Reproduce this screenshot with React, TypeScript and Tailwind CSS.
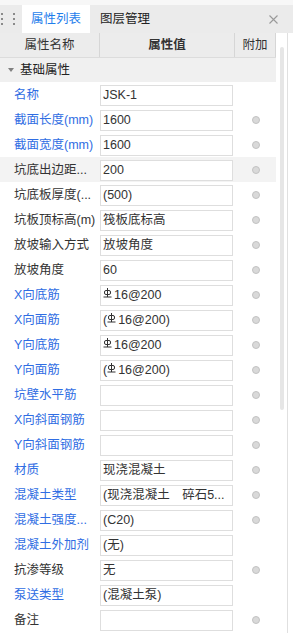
const BLUE = "text-[#2f6de3]";

type Row = { label: string; value?: string; blue?: boolean; rebar?: boolean; paren?: boolean; dot?: boolean; hl?: boolean };

const rows: Row[] = [
  { label: "名称", value: "JSK-1", blue: true, dot: false },
  { label: "截面长度(mm)", value: "1600", blue: true, dot: true },
  { label: "截面宽度(mm)", value: "1600", blue: true, dot: true },
  { label: "坑底出边距...", value: "200", dot: true, hl: true },
  { label: "坑底板厚度(...", value: "(500)", dot: true },
  { label: "坑板顶标高(m)", value: "筏板底标高", dot: true },
  { label: "放坡输入方式", value: "放坡角度", dot: true },
  { label: "放坡角度", value: "60", dot: true },
  { label: "X向底筋", value: "16@200", blue: true, rebar: true, dot: true },
  { label: "X向面筋", value: "16@200", blue: true, rebar: true, paren: true, dot: true },
  { label: "Y向底筋", value: "16@200", blue: true, rebar: true, dot: true },
  { label: "Y向面筋", value: "16@200", blue: true, rebar: true, paren: true, dot: true },
  { label: "坑壁水平筋", value: "", blue: true, dot: true },
  { label: "X向斜面钢筋", value: "", blue: true, dot: true },
  { label: "Y向斜面钢筋", value: "", blue: true, dot: true },
  { label: "材质", value: "现浇混凝土", blue: true, dot: true },
  { label: "混凝土类型", value: "(现浇混凝土　碎石5...", blue: true, dot: true },
  { label: "混凝土强度...", value: "(C20)", blue: true, dot: true },
  { label: "混凝土外加剂", value: "(无)", blue: true, dot: false },
  { label: "抗渗等级", value: "无", dot: true },
  { label: "泵送类型", value: "(混凝土泵)", blue: true, dot: false },
  { label: "备注", value: "", dot: true },
];

function Rebar() {
  return (
    <svg width="10" height="11" viewBox="0 0 10 11" className="inline-block -mt-[4px] mr-[1px] align-middle">
      <rect x="1.5" y="2.5" width="6" height="4" rx="1.5" fill="none" stroke="#333" strokeWidth="1" />
      <line x1="4.5" y1="0" x2="4.5" y2="9" stroke="#333" strokeWidth="1" />
      <line x1="0.5" y1="9" x2="8.5" y2="9" stroke="#333" strokeWidth="1" />
    </svg>
  );
}

export default function App() {
  return (
    <div
      className="w-[293px] h-[633px] overflow-hidden bg-white text-[12.5px] text-[#333]"
      style={{ fontFamily: '"Liberation Sans", "Noto Sans CJK SC", sans-serif' }}
    >
      <div className="h-[5px] bg-[#f7f7f7]" />
      <div className="h-[28px] bg-[#ebebeb] flex items-stretch">
        <div className="w-[22px] grid grid-cols-2 gap-x-[2px] gap-y-[3px] content-center justify-center pl-[1px]">
          {[0, 1, 2, 3, 4, 5].map((i) => (
            <span key={i} className="w-[2px] h-[2px] bg-[#8a8a8a]" />
          ))}
        </div>
        <div className="w-[68px] bg-white flex items-center justify-center text-[#1f7eec]">属性列表</div>
        <div className="px-[10px] flex items-center text-[#222]">图层管理</div>
        <div className="flex-1" />
        <div className="w-[40px] flex items-center justify-center">
          <svg width="9" height="9" viewBox="0 0 9 9">
            <path d="M0.5 0.5L8.5 8.5M8.5 0.5L0.5 8.5" stroke="#9a9a9a" strokeWidth="1.1" />
          </svg>
        </div>
      </div>
      <div className="flex">
        <div className="w-[276px] shrink-0">
          <div className="h-[25px] flex bg-[#ececec] border-b border-[#dcdcdc]">
            <div className="w-[100px] border-r border-[#d6d6d6] flex items-center justify-center">属性名称</div>
            <div className="w-[135px] border-r border-[#d6d6d6] flex items-center justify-center font-semibold">属性值</div>
            <div className="flex-1 border-r border-[#d6d6d6] flex items-center justify-center">附加</div>
          </div>
          <div className="h-[24px] flex items-center bg-[#f0f0f0]">
            <svg width="6" height="4" viewBox="0 0 6 4" className="ml-[8px] mr-[6px]">
              <path d="M0 0H6L3 4Z" fill="#808080" />
            </svg>
            <span className="text-[#222]">基础属性</span>
          </div>
          {rows.map((r, i) => (
            <div key={i} className={`h-[25px] flex items-center pt-[1px] ${r.hl ? "bg-[#f3f3f3]" : ""}`}>
              <div className={`w-[100px] pl-[14px] whitespace-nowrap ${r.blue ? BLUE : "text-[#333]"}`}>{r.label}</div>
              <div className="w-[135px]">
                <div className="w-[133px] h-[21px] bg-white border border-[#dedede] flex items-center pl-[2px] whitespace-nowrap overflow-hidden">
                  {r.rebar ? (
                    <span>
                      {r.paren ? "(" : " "}
                      <Rebar />
                      {r.value}
                      {r.paren ? ")" : ""}
                    </span>
                  ) : (
                    <span>{r.value}</span>
                  )}
                </div>
              </div>
              <div className="flex-1 flex justify-center">
                {r.dot && <span className="w-[8px] h-[8px] rounded-full bg-[#d9d9d9] border border-[#c2c2c2]" />}
              </div>
            </div>
          ))}
        </div>
        <div className="flex-1 flex">
          <div className="w-[11px] pl-[4px] pt-[14px]">
            <div className="w-[4px] h-[363px] rounded-full bg-[#e6e6e6]" />
          </div>
          <div className="w-[1px] h-[620px] bg-[#e0e0e0]" />
        </div>
      </div>
    </div>
  );
}
